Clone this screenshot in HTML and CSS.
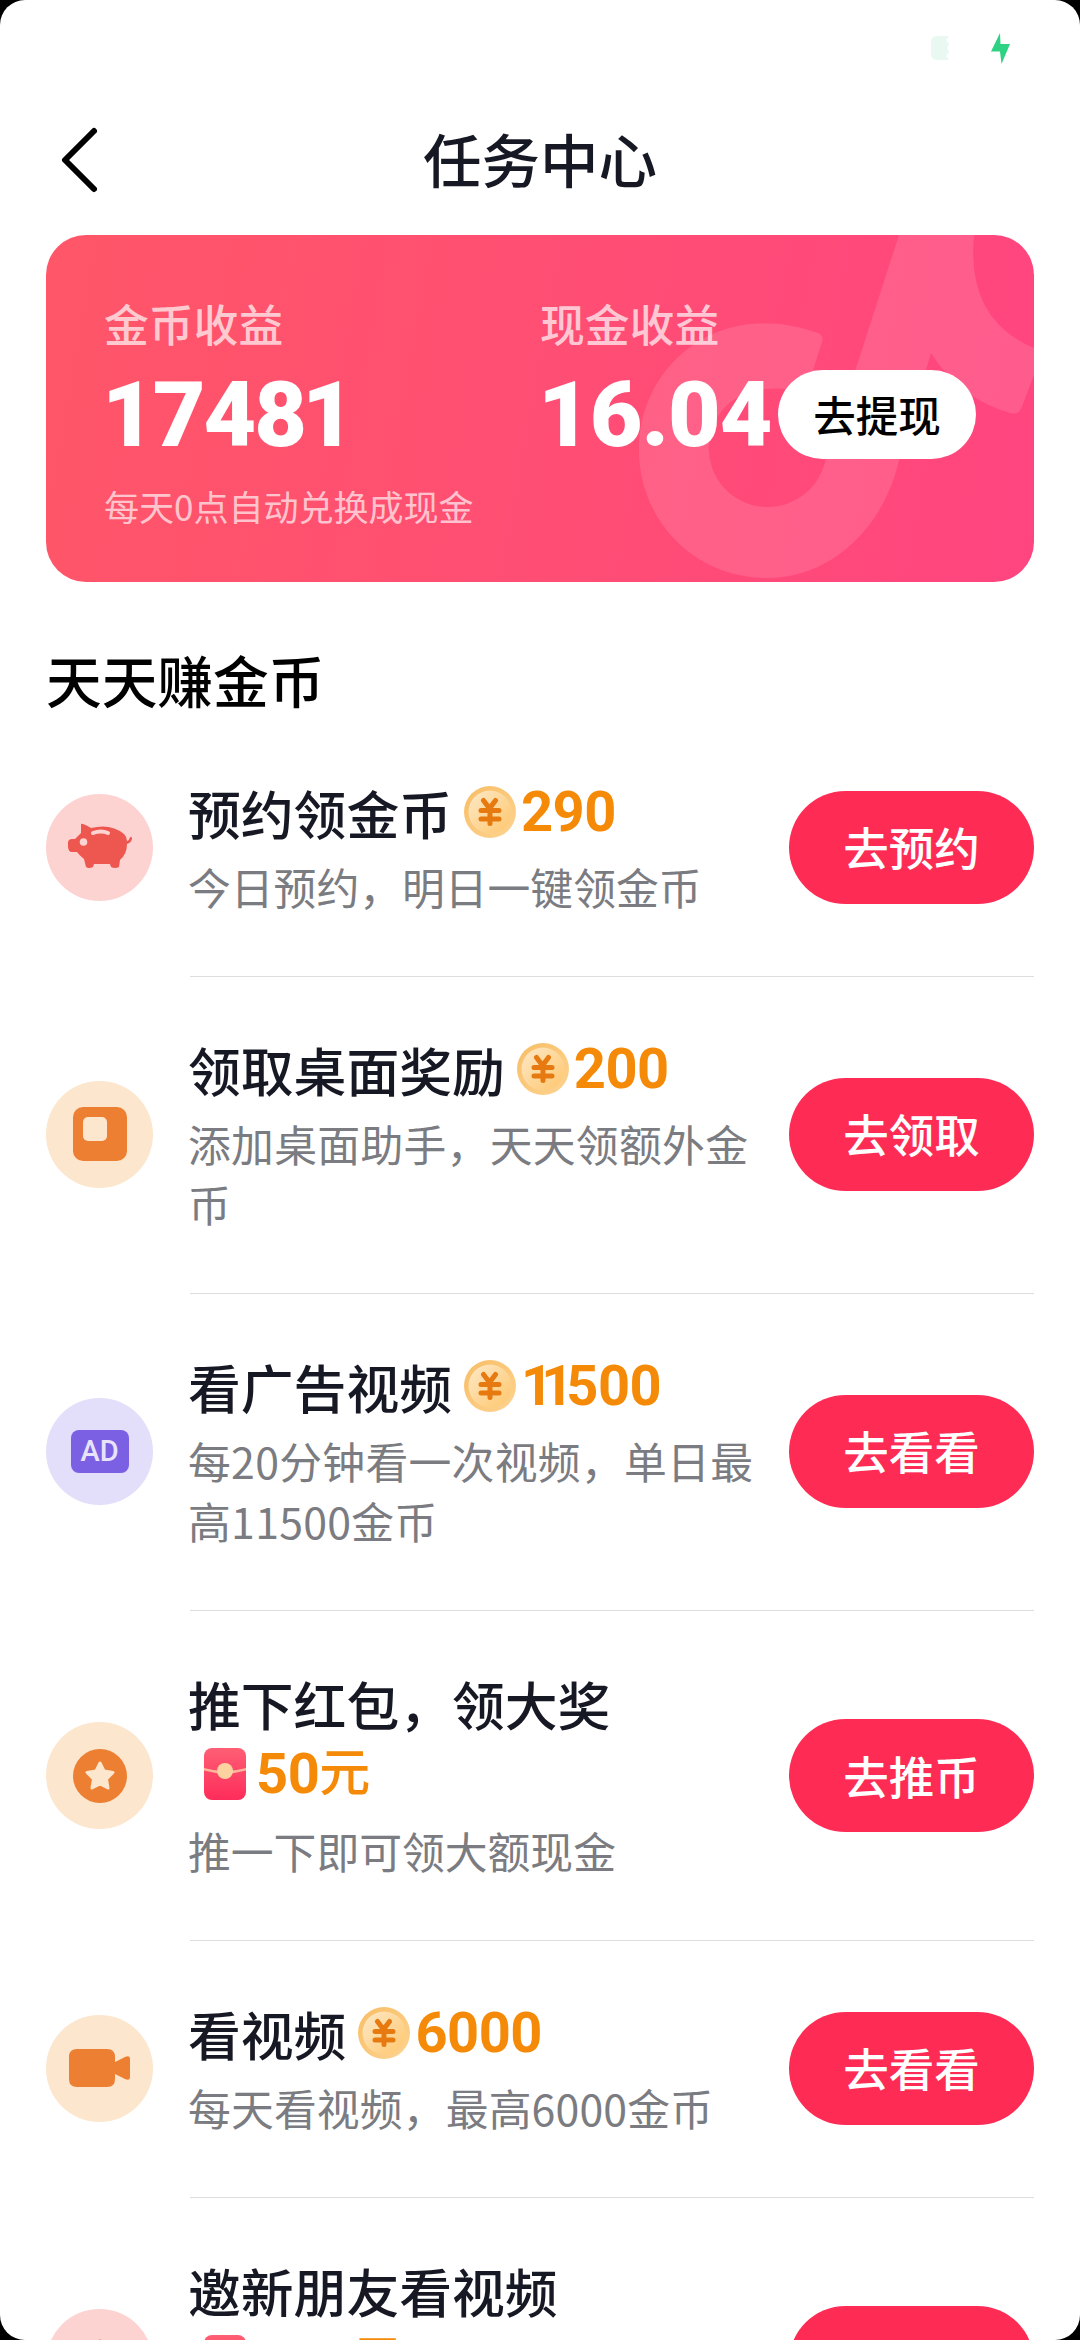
FILE: index.html
```html
<!DOCTYPE html>
<html lang="zh-CN">
<head>
<meta charset="utf-8">
<title>任务中心</title>
<link rel="stylesheet" href="styles.css">
</head>
<body>
<svg class="defs" width="0" height="0" aria-hidden="true">
  <defs>
    <linearGradient id="coin-fill" x1="0" y1="0" x2="1" y2="1">
      <stop offset="0" stop-color="#fde9c8"/><stop offset="1" stop-color="#fec66c"/>
    </linearGradient>
    <linearGradient id="coin-rim" x1="0" y1="0" x2="1" y2="1">
      <stop offset="0" stop-color="#f8bd66"/><stop offset="1" stop-color="#fdd491"/>
    </linearGradient>
    <linearGradient id="packet-fill" x1="0" y1="0" x2="0" y2="1">
      <stop offset="0" stop-color="#fe5f75"/><stop offset="1" stop-color="#fe2c5b"/>
    </linearGradient>
    <symbol id="coin" viewBox="0 0 52 52">
      <circle cx="26" cy="26" r="26" fill="url(#coin-rim)"/>
      <circle cx="26" cy="26" r="21.5" fill="url(#coin-fill)"/>
      <path d="M19.500 14.500l6 8 6-8M17 24.500h18M17 33h18M26 24v13.500" fill="none" stroke="#e67a10" stroke-width="5" stroke-linecap="round" stroke-linejoin="round"/>
    </symbol>
    <symbol id="packet" viewBox="0 0 42 52">
      <rect width="42" height="52" rx="8" fill="url(#packet-fill)"/>
      <path d="M0 20q21 6 42 0v2.500q-21 6-42 0z" fill="#ffb49c"/>
      <circle cx="21" cy="23" r="8" fill="#fcd3a0"/>
    </symbol>
  </defs>
</svg>
<div class="screen">
  <div class="status">
    <svg width="18" height="24" viewBox="0 0 18 24"><path d="M5 0h13l-3 4 3 4-2 4 2 4-3 4 3 4H5q-5-1-5-5V5q0-4 5-5z" fill="#e9f9f2"/></svg>
    <svg width="20" height="31" viewBox="0 0 20 31"><path d="M9 0L0 18.500h9L10.500 31 19 11H9.500z" fill="#2dd283"/></svg>
  </div>
  <header class="nav">
    <svg class="back" width="40" height="68" viewBox="0 0 40 68"><path d="M35 5L6 34l29 29" fill="none" stroke="#000" stroke-width="6" stroke-linecap="round" stroke-linejoin="round"/></svg>
    <h1>任务中心</h1>
  </header>
  <section class="card">
    <svg class="watermark" width="400" height="346" viewBox="0 0 400 346">
      <path class="mark" d="M265 0H340Q332 85 400 113V140L387 174Q384 180 376 178Q325 163 297 118L265 225C250 292 198 343 133 343C60 343 5 285 5 215C5 130 85 62 184 98Q190 101 188 107L173 154Q172 159 166 157Q150 152 133 154A59 59 0 1 0 192 222L222 133Z"/>
    </svg>
    <div class="earn coins">
      <span class="label">金币收益</span>
      <strong>174<span class="tight">8</span>1</strong>
      <small>每天0点自动兑换成现金</small>
    </div>
    <div class="earn cash">
      <span class="label">现金收益</span>
      <strong>16.04</strong>
    </div>
    <button class="withdraw">去提现</button>
  </section>
  <h2>天天赚金币</h2>
  <ul class="tasks">
    <li class="task">
      <span class="icon rose"><svg width="64" height="48" viewBox="0 0 64 48"><path d="M13 1q1-1 10 4 20-5 33 6 3 3 3 7 2 0 3-4 3 0 2 2-1 4-5 5 0 10-7 16l-1 7q-4 2-8 0l-1-3H26l-1 3q-4 2-7 0l-2-8q-5-4-7-7H3q-3-1-3-6-1-7 4-7h3l6-6z" fill="#ed574f"/><circle cx="15.500" cy="19" r="3.800" fill="#fdd3d1"/><path d="M25 10q8-3 15 0" stroke="#fdd3d1" stroke-width="4" fill="none" stroke-linecap="round"/></svg></span>
      <div class="body">
        <h3>预约领金币<span class="prize"><svg class="coin"><use href="#coin"/></svg><b>290</b></span></h3>
        <p>今日预约，明日一键领金币</p>
      </div>
      <button>去预约</button>
    </li>
    <li class="task">
      <span class="icon peach"><svg width="54" height="54" viewBox="0 0 54 54"><rect width="54" height="54" rx="10" fill="#ec7f31"/><rect x="10" y="10" width="24" height="24" rx="5" fill="#fce6cd"/></svg></span>
      <div class="body">
        <h3>领取桌面奖励<span class="prize"><svg class="coin"><use href="#coin"/></svg><b>200</b></span></h3>
        <p class="loose">添加桌面助手，天天领额外金<br>币</p>
      </div>
      <button>去领取</button>
    </li>
    <li class="task">
      <span class="icon lilac"><span class="ad">AD</span></span>
      <div class="body">
        <h3>看广告视频<span class="prize"><svg class="coin"><use href="#coin"/></svg><b><span class="one">1</span><span class="ones">1</span>500</b></span></h3>
        <p class="loose">每20分钟看一次视频，单日最<br>高11500金币</p>
      </div>
      <button>去看看</button>
    </li>
    <li class="task tall">
      <span class="icon peach"><svg width="54" height="54" viewBox="0 0 54 54"><circle cx="27" cy="27" r="27" fill="#ec7f31"/><path d="M27 14l4 8 9 1.500-6.500 6.500 1.500 9-8-4-8 4 1.500-9L14 23.500l9-1.500z" fill="#fce6cd" stroke="#fce6cd" stroke-width="3" stroke-linejoin="round"/></svg></span>
      <div class="body">
        <h3>推下红包，领大奖<br><span class="prize below"><svg class="packet"><use href="#packet"/></svg><b>50<i>元</i></b></span></h3>
        <p>推一下即可领大额现金</p>
      </div>
      <button>去推币</button>
    </li>
    <li class="task">
      <span class="icon peach"><svg width="62" height="38" viewBox="0 0 62 38"><path d="M8 0h30q8 0 8 8v5l10-5q5-2 5 2v18q0 4-5 2l-10-5v5q0 8-8 8H8q-8 0-8-8V8q0-8 8-8z" fill="#ec7f31"/></svg></span>
      <div class="body">
        <h3>看视频<span class="prize"><svg class="coin"><use href="#coin"/></svg><b>6000</b></span></h3>
        <p class="digits">每天看视频，最高6000金币</p>
      </div>
      <button>去看看</button>
    </li>
    <li class="task tall">
      <span class="icon rose"><svg width="54" height="54" viewBox="0 0 54 54"><path d="M27 3l5 7H22z" fill="#ed574f"/></svg></span>
      <div class="body">
        <h3>邀新朋友看视频<br><span class="prize below"><svg class="packet"><use href="#packet"/></svg><b><i class="unit">元</i></b></span></h3>
        <p>&nbsp;</p>
      </div>
      <button></button>
    </li>
  </ul>
</div>
</body>
</html>
```
FILE: styles.css
```css
* { box-sizing: border-box; margin: 0; padding: 0; }
html, body { height: 2340px; overflow: hidden; background: #000; }
body { font-family: "Noto Sans CJK SC", sans-serif; color: #161823; }
.defs { display: block; height: 0; }
.screen { width: 1080px; height: 2340px; background: #fff; border-radius: 25px; overflow: hidden; }

.status { height: 95px; padding: 33px 69px 0 0; display: flex; justify-content: flex-end; gap: 42px; }
.status svg { flex: none; }
.status svg:first-child { margin-top: 3px; }
.nav { height: 140px; display: grid; grid-template-columns: 200px 1fr 200px; align-items: center; }
.nav .back { margin: -11px 0 0 59px; }
.nav h1 { font-size: 58.500px; font-weight: 500; line-height: 84px; text-align: center; margin-top: -14px; }

.card {
  position: relative; height: 347px; margin: 0 46px; padding: 0 58px;
  display: flex; align-items: flex-start; overflow: hidden; border-radius: 40px;
  background: linear-gradient(100deg, #ff5668, #ff4f72 45%, #ff4580);
  color: #fff;
}
.watermark { position: absolute; right: 0; top: 0; }
.mark { fill: rgba(255, 255, 255, .12); }
.earn { position: relative; display: flex; flex-direction: column; padding-top: 56px; white-space: nowrap; }
.earn.coins { width: 436px; }
.earn.cash { width: 238px; }
.label { font-size: 44.800px; font-weight: 500; line-height: 64px; color: rgba(255, 255, 255, .7); }
.earn strong { font: 900 91px/100px Roboto, sans-serif; margin: 10px 0 0 -2px; letter-spacing: -1px; }
.coins strong { letter-spacing: -2px; }
.tight { letter-spacing: -5px; }
.earn small { font-size: 35px; line-height: 50px; margin-top: 16px; color: rgba(255, 255, 255, .68); }
button { border: 0; font-family: inherit; font-weight: 500; white-space: nowrap; flex: none; }
.withdraw { position: relative; width: 198px; height: 89px; margin-top: 135px; padding-bottom: 2px; border-radius: 45px; background: #fff; color: #000; font-size: 42.500px; }

h2 { height: 137px; padding: 57px 0 0 46px; font-size: 55.700px; font-weight: 500; line-height: 80px; color: #000; }
.tasks { list-style: none; padding: 0 46px; }
.task { position: relative; display: flex; align-items: center; padding: 57px 0 60px; }
.task::after { content: ""; position: absolute; left: 144px; right: 0; bottom: -1px; height: 1px; background: #dedee0; }
.icon { width: 107px; height: 107px; margin: 2px 35px 0 0; border-radius: 50%; display: flex; align-items: center; justify-content: center; flex: none; }
.rose { background: #fdd3d1; }
.peach { background: #fce6cd; }
.lilac { background: #e3def9; }
.ad { width: 58px; height: 43px; border-radius: 8px; background: #7b60e3; color: #e8e3fb; font: 500 29px/43px Roboto, sans-serif; text-align: center; }
.body { flex: 1; white-space: nowrap; }
h3 { font-size: 52.800px; font-weight: 500; line-height: 73px; }
.prize { display: inline-flex; align-items: center; height: 52px; vertical-align: -3px; color: #f48a07; }
.prize.below { vertical-align: -1px; }
.coin { width: 52px; height: 52px; margin: 0 5px 0 12px; }
.packet { width: 42px; height: 52px; margin: 0 10px 0 16px; }
.prize b { font: 700 56px/52px Roboto, sans-serif; letter-spacing: -.5px; }
.prize i { display: inline-block; height: 52px; font: 500 51px/52px "Noto Sans CJK SC", sans-serif; vertical-align: 2px; }
.prize.below b { margin-top: -6px; }
.prize .unit { margin-left: 96px; }
.prize .one { letter-spacing: -12px; }
.prize .ones { letter-spacing: -7px; }
.body p { font-size: 42.800px; font-weight: 400; line-height: 60px; margin-top: 7px; color: #7b7c81; }
.body .loose { letter-spacing: .3px; }
.body .digits { letter-spacing: .15px; }
.task button { width: 245px; height: 113px; margin-top: 2px; padding-bottom: 2px; border-radius: 57px; background: #fe2c55; color: #fff; font-size: 45.500px; }
.tall .icon, .tall button { margin-top: 4px; }
```
